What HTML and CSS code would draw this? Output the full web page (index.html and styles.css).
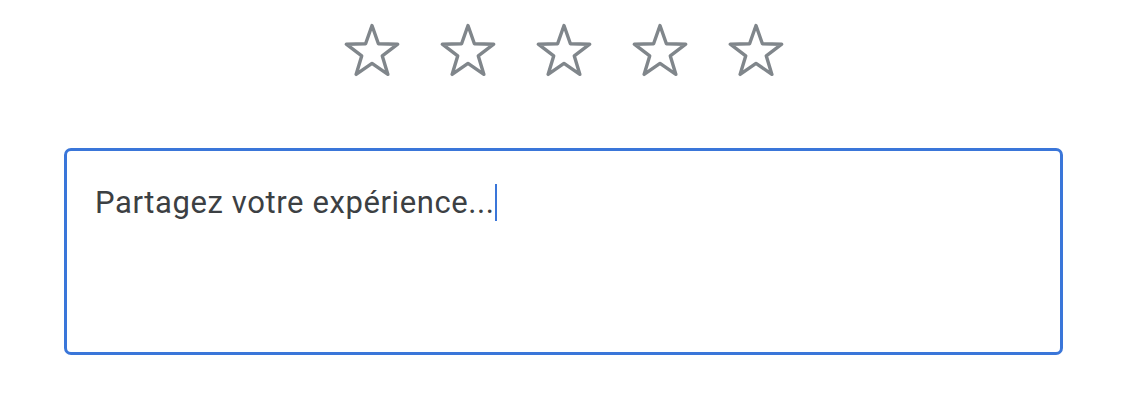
FILE: index.html
```html
<!DOCTYPE html>
<html lang="fr">
<head>
<meta charset="utf-8">
<title>Avis</title>
<link rel="stylesheet" href="styles.css">
</head>
<body>
<div class="rating">
  <svg class="star" viewBox="0 0 58 58" width="58" height="58"><polygon points="29,3.5 35.4,21.8 54.7,22.2 39.3,33.9 44.9,52.4 29,41.4 13.1,52.4 18.7,33.9 3.3,22.2 22.6,21.8"/></svg>
  <svg class="star" viewBox="0 0 58 58" width="58" height="58"><polygon points="29,3.5 35.4,21.8 54.7,22.2 39.3,33.9 44.9,52.4 29,41.4 13.1,52.4 18.7,33.9 3.3,22.2 22.6,21.8"/></svg>
  <svg class="star" viewBox="0 0 58 58" width="58" height="58"><polygon points="29,3.5 35.4,21.8 54.7,22.2 39.3,33.9 44.9,52.4 29,41.4 13.1,52.4 18.7,33.9 3.3,22.2 22.6,21.8"/></svg>
  <svg class="star" viewBox="0 0 58 58" width="58" height="58"><polygon points="29,3.5 35.4,21.8 54.7,22.2 39.3,33.9 44.9,52.4 29,41.4 13.1,52.4 18.7,33.9 3.3,22.2 22.6,21.8"/></svg>
  <svg class="star" viewBox="0 0 58 58" width="58" height="58"><polygon points="29,3.5 35.4,21.8 54.7,22.2 39.3,33.9 44.9,52.4 29,41.4 13.1,52.4 18.7,33.9 3.3,22.2 22.6,21.8"/></svg>
</div>
<div class="review-box">
  <p class="review-text">Partagez votre expérience...<span class="caret"></span></p>
</div>
</body>
</html>
```
FILE: styles.css
```css
html, body {
  margin: 0;
  padding: 0;
  background: #ffffff;
}
body {
  font-family: Roboto, "Liberation Sans", Arial, sans-serif;
  width: 1126px;
  height: 408px;
  overflow: hidden;
}
.rating {
  display: flex;
  justify-content: center;
  gap: 38px;
  padding-top: 22px;
  padding-left: 1px;
}
.star {
  display: block;
  fill: none;
  stroke: #80868b;
  stroke-width: 3.4;
  stroke-linejoin: round;
}
.review-box {
  box-sizing: border-box;
  margin: 68px 63px 0 64px;
  height: 207px;
  border: 3px solid #3a76d9;
  border-radius: 7px;
  padding: 33px 28px 0 28px;
}
.review-text {
  margin: 0;
  font-size: 31px;
  letter-spacing: 0.6px;
  line-height: 37px;
  color: #3c4043;
  display: flex;
  align-items: center;
}
.caret {
  display: inline-block;
  width: 2px;
  height: 37px;
  background: #3a76d9;
  margin-left: 0;
}
```
